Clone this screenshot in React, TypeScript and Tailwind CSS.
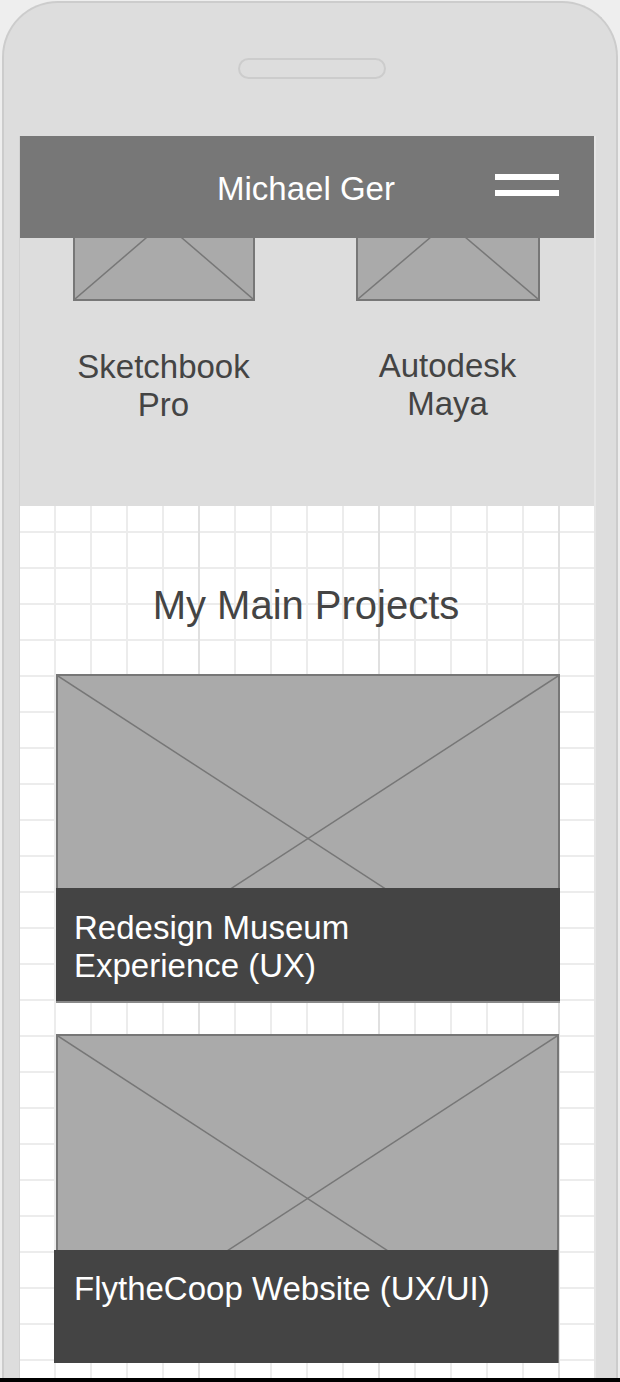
import React from "react";

const Placeholder = ({ className }: { className: string }) => (
  <div className={`relative border-2 border-[#777777] bg-[#aaaaaa] ${className}`}>
    <svg
      className="absolute inset-0 h-full w-full"
      preserveAspectRatio="none"
      viewBox="0 0 100 100"
    >
      <line x1="0" y1="0" x2="100" y2="100" stroke="#777777" strokeWidth="1.5" vectorEffect="non-scaling-stroke" />
      <line x1="100" y1="0" x2="0" y2="100" stroke="#777777" strokeWidth="1.5" vectorEffect="non-scaling-stroke" />
    </svg>
  </div>
);

const ProjectCard = ({
  lines,
  imgClass,
  capClass,
}: {
  lines: string[];
  imgClass: string;
  capClass: string;
}) => (
  <div className="relative">
    <Placeholder className={imgClass} />
    {/* caption sits over the bottom of the picture */}
    <div className={`absolute bottom-0 bg-[#444444] text-white text-[33px] leading-[38px] ${capClass}`}>
      {lines.map((l) => (
        <div key={l}>{l}</div>
      ))}
    </div>
  </div>
);

export default function App() {
  return (
    <div className="w-[620px] h-[1382px] overflow-hidden bg-[#eeeeee] font-['Liberation_Sans',Arial,sans-serif]">
      <div className="ml-[2px] mt-[1px] w-[616px] h-[1377px] rounded-t-[56px] border-2 border-b-0 border-[#cccccc] bg-[#dddddd] flex flex-col">
        {/* speaker */}
        <div className="ml-[234px] mt-[55px] w-[148px] h-[21px] rounded-full border-2 border-[#cccccc]" />

        {/* screen */}
        <div className="relative ml-[15px] mt-[57px] w-[577px] flex-1 overflow-hidden border-l border-r-2 border-[#d2d2d2] border-r-[#e6e6e6]">
          {/* fixed header over the scrolled content */}
          <div className="absolute inset-x-0 top-0 z-10 h-[102px] bg-[#777777] flex items-center">
            <div className="w-full text-center text-white text-[33px] leading-none pr-[2px] pt-[2px]">Michael Ger</div>
            <div className="absolute right-[35px] top-[38px] flex flex-col gap-[10px]">
              <div className="h-[6px] w-[64px] bg-white" />
              <div className="h-[6px] w-[64px] bg-white" />
            </div>
          </div>

          {/* tools section */}
          <div className="h-[370px] bg-[#dddddd] pt-[8px] grid grid-cols-2 text-[#444444] text-[33px] leading-[38px] text-center">
            <div className="flex flex-col items-center">
              <Placeholder className="w-[182px] h-[157px]" />
              <div className="mt-[47px]">
                Sketchbook
                <br />
                Pro
              </div>
            </div>
            <div className="flex flex-col items-center pr-[6px]">
              <Placeholder className="w-[184px] h-[157px]" />
              <div className="mt-[46px]">
                Autodesk
                <br />
                Maya
              </div>
            </div>
          </div>

          {/* projects section */}
          <div className="h-full bg-white [background-image:linear-gradient(to_right,#e0e0e0_2px,transparent_2px),linear-gradient(to_right,#ececec_2px,transparent_2px),linear-gradient(to_bottom,#ececec_2px,transparent_2px)] [background-size:180px_180px,36px_36px,36px_36px] [background-position:178px_0,34px_0,0_25px] pt-[75px]">
            <h2 className="text-center text-[40px] leading-[48px] text-[#444444] pr-[2px]">My Main Projects</h2>

            <div className="mt-[45px] flex flex-col gap-[31px]">
              <ProjectCard
                lines={["Redesign Museum", "Experience (UX)"]}
                imgClass="ml-[36px] w-[504px] h-[329px]"
                capClass="left-[36px] w-[504px] h-[115px] pl-[18px] pt-[21px] border-b-2 border-[#888888]"
              />
              <ProjectCard
                lines={["FlytheCoop Website (UX/UI)"]}
                imgClass="ml-[36px] w-[503px] h-[329px]"
                capClass="left-[34px] w-[504px] h-[113px] pl-[20px] pt-[20px]"
              />
            </div>
          </div>
        </div>
      </div>
      <div className="h-[4px] bg-black" />
    </div>
  );
}
